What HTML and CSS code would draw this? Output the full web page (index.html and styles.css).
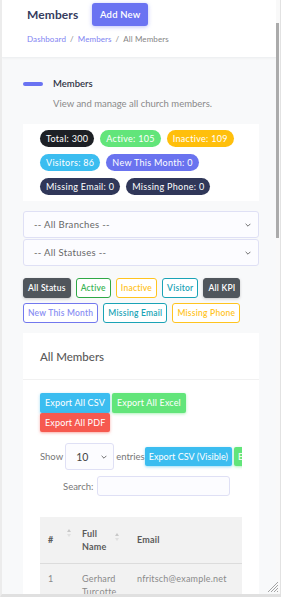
FILE: index.html
```html
<!DOCTYPE html>
<html lang="en">
<head>
<meta charset="utf-8">
<title>Members</title>
<link rel="stylesheet" href="styles.css">
</head>
<body>
<div class="frame">
  <div class="scroller">
    <header class="topbar">
      <div class="title-row">
        <h1 class="page-title">Members</h1>
        <button class="btn-add">Add New</button>
      </div>
      <nav class="crumbs">
        <a class="crumb-link">Dashboard</a><span class="sep">/</span><a class="crumb-link">Members</a><span class="sep">/</span><span class="crumb-cur">All Members</span>
      </nav>
    </header>
    <main class="content">
      <div class="page-head">
        <span class="pill-bar"></span>
        <div class="head-text">
          <h2 class="head-title">Members</h2>
          <p class="head-sub">View and manage all church members.</p>
        </div>
      </div>

      <div class="stats">
        <span class="badge b-dark">Total: 300</span>
        <span class="badge b-green">Active: 105</span>
        <span class="badge b-yellow">Inactive: 109</span>
        <span class="badge b-blue">Visitors: 86</span>
        <span class="badge b-indigo">New This Month: 0</span>
        <span class="badge b-navy">Missing Email: 0</span>
        <span class="badge b-navy">Missing Phone: 0</span>
      </div>

      <div class="selects">
        <div class="sel"><span>-- All Branches --</span><svg class="chev" viewBox="0 0 10 6"><path d="M1 1l4 4 4-4" fill="none" stroke="#555" stroke-width="1.4"/></svg></div>
        <div class="sel"><span>-- All Statuses --</span><svg class="chev" viewBox="0 0 10 6"><path d="M1 1l4 4 4-4" fill="none" stroke="#555" stroke-width="1.4"/></svg></div>
      </div>

      <div class="filters">
        <button class="fb fb-dark">All Status</button>
        <button class="fb fb-green">Active</button>
        <button class="fb fb-yellow">Inactive</button>
        <button class="fb fb-teal">Visitor</button>
        <button class="fb fb-dark">All KPI</button>
        <button class="fb fb-indigo">New This Month</button>
        <button class="fb fb-teal">Missing Email</button>
        <button class="fb fb-yellow">Missing Phone</button>
      </div>

      <section class="card">
        <div class="card-head">All Members</div>
        <div class="card-body">
          <div class="exports">
            <button class="xb xb-blue">Export All CSV</button>
            <button class="xb xb-green">Export All Excel</button>
            <button class="xb xb-red">Export All PDF</button>
          </div>
          <div class="dt-wrap">
            <div class="len-row">
              <span class="lbl">Show</span>
              <div class="len-sel"><span>10</span><svg class="chev" viewBox="0 0 10 6"><path d="M1 1l4 4 4-4" fill="none" stroke="#555" stroke-width="1.4"/></svg></div>
              <span class="lbl">entries</span>
              <button class="xb xb-blue vis">Export CSV (Visible)</button>
              <button class="xb xb-green vis">Export Excel (Visible)</button>
            </div>
            <div class="search-row">
              <span class="lbl">Search:</span>
              <span class="search-box"></span>
            </div>
            <table class="tbl">
              <thead>
                <tr>
                  <th class="c-num"><span class="th-in">#<span class="sort"><i class="up"></i><i class="dn"></i></span></span></th>
                  <th class="c-name"><span class="th-in">Full<br>Name<span class="sort"><i class="up"></i><i class="dn"></i></span></span></th>
                  <th class="c-email">Email</th>
                </tr>
              </thead>
              <tbody>
                <tr>
                  <td class="c-num">1</td>
                  <td class="c-name">Gerhard Turcotte</td>
                  <td class="c-email">nfritsch@example.net</td>
                </tr>
              </tbody>
            </table>
          </div>
        </div>
      </section>
    </main>
  </div>
  <div class="vbar"><div class="thumb"></div></div>
  <svg class="resizer" viewBox="0 0 13 13"><path d="M12 2L2 12M12 5L5 12M12 8L8 12M12 11L11 12" stroke="#9a9a9a" stroke-width="0.9" fill="none"/></svg>
</div>
</body>
</html>
```

FILE: styles.css
```css
* { box-sizing: border-box; }
html, body { margin: 0; padding: 0; }
body {
  font-family: "Lato", "Noto Sans", sans-serif;
  background: #e6e6e6;
}
.frame {
  position: relative;
  width: 281px;
  height: 597px;
  border-left: 2px solid #ececec;
  border-bottom: 3px solid #e0e0e0;
  display: flex;
  overflow: hidden;
}
.scroller {
  width: 274px;
  flex: none;
  background: #f8f9fa;
  overflow: hidden;
}
.vbar {
  flex: 1;
  background: #f9f9f9;
  border-right: 1px solid #e2e2e2;
  padding-top: 23px;
}
.thumb { width: 3px; height: 215px; background: #ababab; }
.resizer { position: absolute; right: 2px; bottom: 1px; width: 13px; height: 13px; }

.topbar {
  background: #fff;
  height: 58px;
  padding: 3px 0 0 25px;
  border-bottom: 1px solid #eef0f2;
  box-shadow: 0 1px 2px rgba(0,0,0,0.03);
}
.title-row { display: flex; align-items: center; gap: 14px; height: 23px; }
.page-title { margin: 0; font-size: 12px; font-weight: 700; color: #353c5e; letter-spacing: 0.1px; }
.btn-add {
  height: 23px; width: 56px; border: 0; border-radius: 3px;
  background: #6a73f2; color: #fff; font: 600 9.5px "Lato", sans-serif; letter-spacing: 0.2px;
  box-shadow: 0 1px 4px rgba(106,115,242,0.45);
  padding: 0;
}
.crumbs { margin-top: 8px; font-size: 8px; color: #888; display: flex; letter-spacing: 0.1px; }
.crumb-link { color: #7f84f2; }
.sep { margin: 0 4px; color: #888; }
.crumb-cur { color: #858585; }

.content { padding: 21px 17px 0 21px; }
.page-head { display: flex; align-items: flex-start; gap: 10px; }
.pill-bar { width: 20px; height: 4px; border-radius: 2px; background: #6a73f2; margin-top: 3px; }
.head-title { margin: 0; font-size: 9.5px; font-weight: 600; color: #2f3445; line-height: 10px; }
.head-sub { margin: 9px 0 0; font-size: 9.5px; color: #8a8a8a; line-height: 11px; }

.stats {
  margin-top: 15px;
  background: #fff;
  padding: 6px 17px 6px 17px;
  display: flex; flex-wrap: wrap; gap: 7px 6px;
}
.badge {
  height: 17px; padding: 0 6px; border-radius: 9px;
  display: inline-flex; align-items: center;
  font-size: 9px; letter-spacing: 0.3px; color: #fff;
}
.b-dark { background: #1d2025; }
.b-green { background: #62e57a; }
.b-yellow { background: #ffbf0c; }
.b-blue { background: #3bbdf0; }
.b-indigo { background: #6a73ef; }
.b-navy { background: #303759; }

.selects { margin-top: 10px; display: flex; flex-direction: column; gap: 1px; }
.sel {
  height: 27px; border: 1px solid #dfe0f5; border-radius: 3px; background: #fcfcff;
  display: flex; align-items: center; justify-content: space-between;
  padding: 0 7px 0 10px; font-size: 9.5px; letter-spacing: 0.3px; color: #676767;
}
.chev { width: 6px; height: 4px; }

.filters { margin-top: 12px; display: flex; flex-wrap: wrap; gap: 5px 5px; }
.fb {
  height: 20px; padding: 0 4px; border-radius: 3px; font: 600 8.5px "Lato", sans-serif; letter-spacing: 0.22px;
  background: #fff; border: 1px solid;
}
.fb-dark { background: #50565c; border-color: #50565c; color: #fff; box-shadow: 0 1px 3px rgba(0,0,0,0.2); }
.fb-green { border-color: #2fa846; color: #3cb556; }
.fb-yellow { border-color: #ffc41f; color: #ffc41f; }
.fb-teal { border-color: #1aa3b6; color: #1aa3b6; }
.fb-indigo { border-color: #7278ee; color: #8a8ff3; }

.card { margin-top: 10px; background: #fff; }
.card-head {
  height: 47px; border-bottom: 1px solid #f1f1f1;
  display: flex; align-items: center; padding-left: 17px;
  font-size: 11.5px; color: #5a5a5a; font-weight: 500;
}
.card-body { padding: 13px 17px 0 17px; }
.exports { display: flex; flex-wrap: wrap; gap: 0 2px; width: 160px; }
.xb {
  height: 19.5px; border: 0; border-radius: 2px; padding: 0 5px;
  font: 9px "Lato", sans-serif; letter-spacing: 0.15px; color: #fff; white-space: nowrap;
}
.xb-blue { background: #3bbdf0; box-shadow: 0 1px 3px rgba(59,189,240,0.5); }
.xb-green { background: #62e57a; box-shadow: 0 1px 3px rgba(98,229,122,0.5); }
.xb-red { background: #f6594f; box-shadow: 0 1px 3px rgba(246,89,79,0.5); }

.dt-wrap { margin-top: 11px; overflow: hidden; }
.len-row { display: flex; align-items: center; white-space: nowrap; }
.lbl { font-size: 9.5px; color: #777; letter-spacing: 0; }
.len-sel {
  margin: 0 2px 0 2px; width: 49px; height: 27px; flex: none;
  border: 1px solid #dfe0f5; border-radius: 3px; background: #fcfcff;
  display: flex; align-items: center; justify-content: space-between; padding: 0 6px 0 10px;
  font-size: 10.5px; color: #444;
}
.xb.vis { flex: none; letter-spacing: 0.05px; padding: 0 4px; }
.len-row .xb-green { margin-left: 2px; }

.search-row { margin-top: 6px; display: flex; align-items: center; padding-left: 23px; gap: 4px; }
.search-box { width: 133px; height: 20px; border: 1px solid #dfe0f5; border-radius: 3px; background: #fcfcff; }

.tbl { margin-top: 21px; width: 202px; border-collapse: collapse; background: #f2f2f2; }
.tbl th { font-size: 9px; font-weight: 700; color: #5a5a5a; text-align: left; height: 46px; vertical-align: middle; border-bottom: 1px solid #dcdcdc; padding: 0 8px; line-height: 13px; letter-spacing: 0.2px; }
.tbl td { font-size: 9px; color: #8a8a8a; vertical-align: top; padding: 8px 8px 0; line-height: 13px; letter-spacing: 0.2px; }
.c-num { width: 34px; }
.c-name { width: 55px; }
.th-in { display: inline-block; position: relative; padding-right: 12px; }
.sort { position: absolute; right: 0; top: 50%; margin-top: -7px; display: flex; flex-direction: column; gap: 2px; }
.c-num .sort { right: -6px; margin-top: -11px; }
.sort i { width: 0; height: 0; border-left: 2px solid transparent; border-right: 2px solid transparent; }
.sort .up { border-bottom: 3px solid #c8c8c8; }
.sort .dn { border-top: 3px solid #e0e0e0; }
```
